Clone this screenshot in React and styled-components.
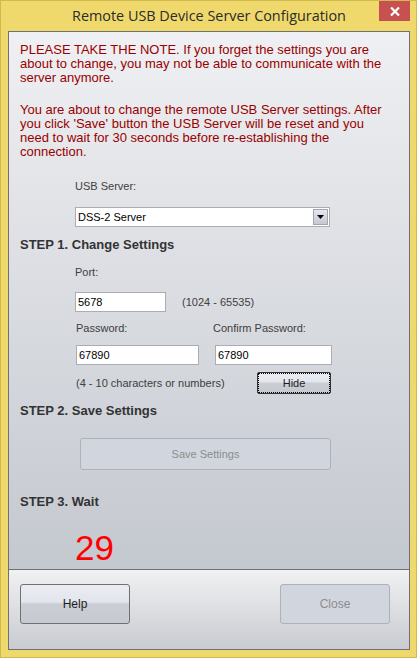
import React from "react";
import styled, { createGlobalStyle } from "styled-components";

const GlobalStyle = createGlobalStyle`
  html, body {
    margin: 0;
    padding: 0;
  }
  body {
    width: 417px;
    height: 658px;
    overflow: hidden;
    background: #f0d96c;
    font-family: "Liberation Sans", Arial, sans-serif;
  }
`;

const Window = styled.div`
  width: 417px;
  height: 658px;
  box-sizing: border-box;
  background: #f0d96c;
  border: 1px solid #d2b94e;
  padding: 0 6px 7px 7px;
  display: flex;
  flex-direction: column;
`;

const TitleBar = styled.div`
  height: 30px;
  flex: none;
  display: grid;
  grid-template-columns: 1fr auto 1fr;
  align-items: start;
`;

const Title = styled.div`
  grid-column: 2;
  font-family: "Open Sans", "Noto Sans", sans-serif;
  font-size: 14.4px;
  line-height: 30px;
  color: #2b2b2b;
  white-space: nowrap;
`;

const CloseX = styled.div`
  grid-column: 3;
  justify-self: end;
  width: 31px;
  height: 20px;
  background: #c75050;
  display: flex;
  align-items: center;
  justify-content: center;
`;

const Client = styled.div`
  flex: 1;
  border: 1px solid #6e7074;
  display: flex;
  flex-direction: column;
`;

const Main = styled.div`
  flex: 1;
  background: linear-gradient(#eff0f3, #c4c8cf);
  padding: 11px 0 0 11px;
  display: flex;
  flex-direction: column;
  align-items: flex-start;
`;

const Note = styled.p`
  margin: ${(p) => p.$top || 0}px 0 0;
  font-size: 13px;
  line-height: 14px;
  color: #990000;
  white-space: nowrap;
`;

const Label = styled.div`
  margin-top: ${(p) => p.$top || 0}px;
  margin-left: ${(p) => p.$left || 0}px;
  font-size: 11px;
  line-height: 13px;
  color: #404040;
  white-space: nowrap;
`;

const Step = styled.div`
  margin-top: ${(p) => p.$top}px;
  font-size: 13px;
  font-weight: bold;
  line-height: 16px;
  color: #333;
`;

const Combo = styled.div`
  margin: 14px 0 0 55px;
  width: 255px;
  height: 20px;
  box-sizing: border-box;
  background: #fff;
  border: 1px solid #abadb3;
  display: flex;
  align-items: center;
  justify-content: space-between;
  padding: 0 1px 0 2px;
  font-size: 11px;
  color: #000;
`;

const DropButton = styled.div`
  width: 15px;
  height: 16px;
  box-sizing: border-box;
  border: 1px solid #a4a5ad;
  background: linear-gradient(#e6e7ee, #c6c8d2);
  display: flex;
  align-items: center;
  justify-content: center;
`;

const Row = styled.div`
  margin-top: ${(p) => p.$top}px;
  margin-left: ${(p) => p.$left || 0}px;
  display: flex;
  align-items: center;
  gap: ${(p) => p.$gap || 0}px;
`;

const Field = styled.div`
  width: ${(p) => p.$w}px;
  height: 20px;
  box-sizing: border-box;
  background: #fff;
  border: 1px solid #abadb3;
  padding-left: 2px;
  font-size: 11px;
  line-height: 18px;
  color: #000;
`;

const Column = styled.div`
  width: ${(p) => p.$w}px;
`;

const Button = styled.div`
  width: ${(p) => p.$w}px;
  height: ${(p) => p.$h}px;
  box-sizing: border-box;
  border-radius: 3px;
  display: flex;
  align-items: center;
  justify-content: center;
  font-size: ${(p) => p.$size || 11}px;
  border: 1px solid ${(p) => (p.$disabled ? "#adb2b8" : "#707070")};
  color: ${(p) => (p.$disabled ? "#8c8c8c" : "#1c1c1c")};
  background: ${(p) =>
    p.$disabled
      ? "#d1d6de"
      : "linear-gradient(#ebecf3 0%, #e3e5ee 45%, #cbcdd5 50%, #c8cad2 100%)"};
`;

const FocusButton = styled(Button)`
  border-color: #333;
  border-radius: 2px;
  outline: 1px dotted #000;
  outline-offset: -2px;
`;

const SaveButton = styled(Button)`
  margin: 19px 0 0 60px;
`;

const Counter = styled.div`
  margin: 20px 0 0 55px;
  font-size: 35px;
  line-height: 35px;
  color: #ff0000;
`;

const Footer = styled.div`
  height: 65px;
  flex: none;
  border-top: 1px solid #6e7074;
  background: linear-gradient(#f1f1f2, #c8cbd1);
  padding: 14px 19px 0 11px;
  display: flex;
  justify-content: space-between;
  align-items: flex-start;
`;

const App = () => {
  return (
    <>
      <GlobalStyle />
      <Window>
        <TitleBar>
          <Title>Remote USB Device Server Configuration</Title>
          <CloseX>
            <svg width="10" height="9" viewBox="0 0 10 9">
              <path d="M1 0.5 L9 8.5 M9 0.5 L1 8.5" stroke="#fff" strokeWidth="2.2" />
            </svg>
          </CloseX>
        </TitleBar>
        <Client>
          <Main>
            <Note>
              PLEASE TAKE THE NOTE. If you forget the settings you are
              <br />
              about to change, you may not be able to communicate with the
              <br />
              server anymore.
            </Note>
            <Note $top={18}>
              You are about to change the remote USB Server settings. After
              <br />
              you click 'Save' button the USB Server will be reset and you
              <br />
              need to wait for 30 seconds before re-establishing the
              <br />
              connection.
            </Note>
            <Label $top={21} $left={55}>
              USB Server:
            </Label>
            <Combo>
              <span>DSS-2 Server</span>
              <DropButton>
                <svg width="7" height="4" viewBox="0 0 7 4">
                  <path d="M0 0 H7 L3.5 4 Z" fill="#000" />
                </svg>
              </DropButton>
            </Combo>
            <Step $top={10}>STEP 1. Change Settings</Step>
            <Label $top={13} $left={55}>
              Port:
            </Label>
            <Row $top={13} $left={55} $gap={16}>
              <Field $w={91}>5678</Field>
              <Label>(1024 - 65535)</Label>
            </Row>
            <Row $top={10} $left={56} $gap={15}>
              <Column $w={123}>
                <Label>Password:</Label>
              </Column>
              <Column $w={117}>
                <Label $left={-1}>Confirm Password:</Label>
              </Column>
            </Row>
            <Row $top={10} $left={56} $gap={16}>
              <Field $w={123}>67890</Field>
              <Field $w={117}>67890</Field>
            </Row>
            <Row $top={7} $left={56}>
              <Column $w={181}>
                <Label>(4 - 10 characters or numbers)</Label>
              </Column>
              <FocusButton $w={74} $h={22}>
                Hide
              </FocusButton>
            </Row>
            <Step $top={9}>STEP 2. Save Settings</Step>
            <SaveButton $w={251} $h={32} $disabled>
              Save Settings
            </SaveButton>
            <Step $top={24}>STEP 3. Wait</Step>
            <Counter>29</Counter>
          </Main>
          <Footer>
            <Button $w={110} $h={40} $size={12}>
              Help
            </Button>
            <Button $w={110} $h={40} $size={12} $disabled>
              Close
            </Button>
          </Footer>
        </Client>
      </Window>
    </>
  );
};

export default App;
